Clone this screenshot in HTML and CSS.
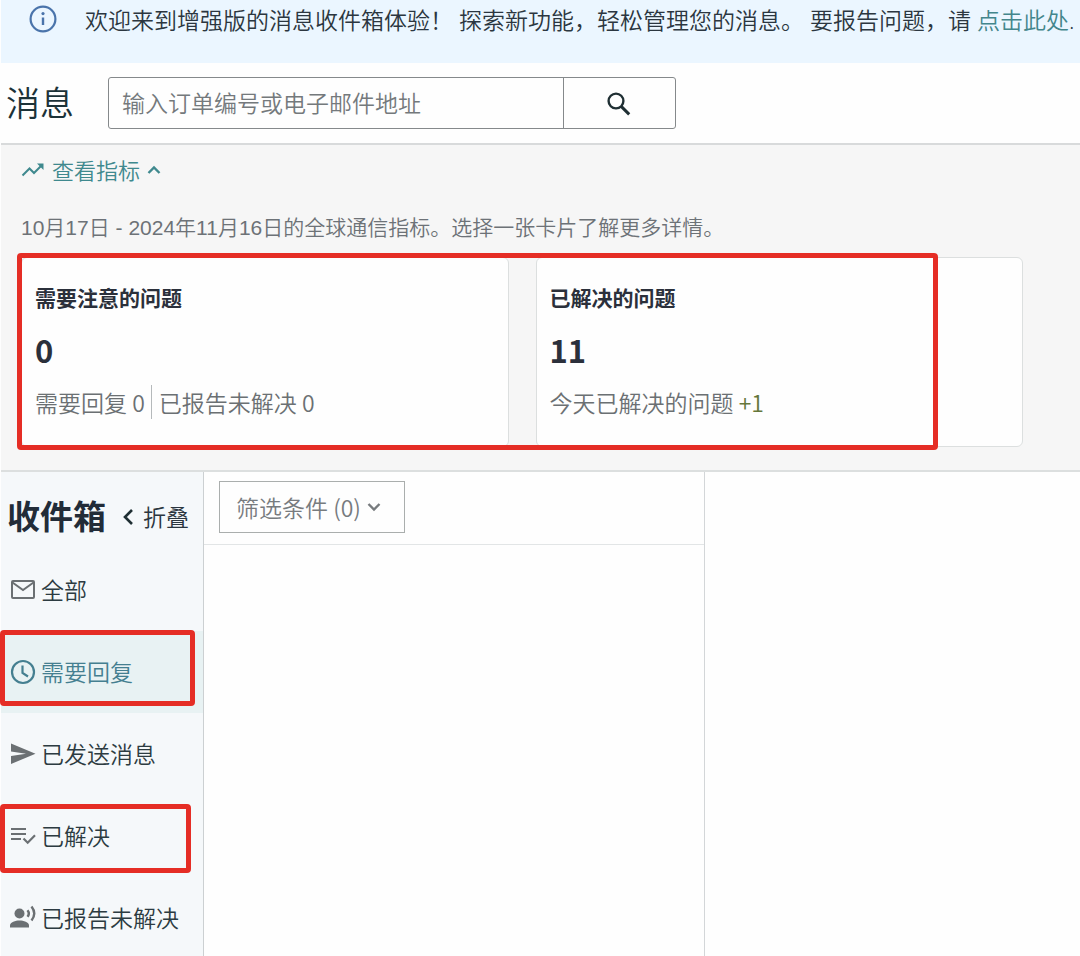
FILE: index.html
```html
<!DOCTYPE html>
<html lang="zh-CN">
<head>
  <meta charset="UTF-8">
  <meta name="viewport" content="width=device-width, initial-scale=1.0">
  <title>消息</title>
  <link rel="stylesheet" href="styles.css">
</head>
<body>

  <div class="alert">
    <svg class="alert-icon" viewBox="0 0 28 28">
      <circle cx="14" cy="14" r="12.4" fill="none" stroke="#4a74ab" stroke-width="2.2"/>
      <path d="M14 12.5v7.5" stroke="#4a74ab" stroke-width="2.4"/>
      <circle cx="14" cy="8.6" r="1.6" fill="#4a74ab"/>
    </svg>
    <p>欢迎来到增强版的消息收件箱体验！ 探索新功能，轻松管理您的消息。 要报告问题，请 <a href="#">点击此处</a>.</p>
  </div>

  <header class="header">
    <h1>消息</h1>
    <form class="search">
      <input type="text" aria-label="搜索消息" placeholder="输入订单编号或电子邮件地址">
      <button type="button" aria-label="搜索">
        <svg width="26" height="26" viewBox="0 0 26 26" fill="none" stroke="#1f2f33">
          <circle cx="9" cy="11" r="7.4" stroke-width="2.4"/>
          <path d="M14.2 16.4l8 8" stroke-width="3"/>
        </svg>
      </button>
    </form>
  </header>

  <section class="metrics">
    <button type="button" class="metrics-toggle">
      <svg width="24" height="16" viewBox="0 0 24 16" fill="none" stroke="currentColor" stroke-width="2">
        <path d="M1.5 13.5l7-7 4.5 4.5 8-8"/>
        <path d="M16 1.5h6.5V8z" fill="currentColor" stroke="none"/>
      </svg>
      查看指标
      <svg width="14" height="10" viewBox="0 0 14 10" fill="none" stroke="currentColor" stroke-width="2.4">
        <path d="M1.5 8L7 2.5 12.5 8"/>
      </svg>
    </button>
    <p class="metrics-note">10月17日 - 2024年11月16日的全球通信指标。选择一张卡片了解更多详情。</p>

    <div class="cards">
      <div class="card">
        <h2>需要注意的问题</h2>
        <div class="count">0</div>
        <p><span class="split">需要回复 0</span><span>已报告未解决 0</span></p>
      </div>
      <div class="card">
        <h2>已解决的问题</h2>
        <div class="count">11</div>
        <p>今天已解决的问题 <span class="up">+1</span></p>
      </div>
      <div class="mark mark-cards"></div>
    </div>
  </section>

  <main class="inbox">
    <nav class="sidebar">
      <div class="sidebar-head">
        <h2>收件箱</h2>
        <button type="button">
          <svg width="12" height="18" viewBox="0 0 12 18" fill="none" stroke="#1f2f33" stroke-width="2.6">
            <path d="M10 2L3 9l7 7"/>
          </svg>
          折叠
        </button>
      </div>

      <a href="#" class="item">
        <svg viewBox="0 0 26 26" fill="none" stroke="currentColor" stroke-width="2">
          <rect x="2" y="4" width="22" height="17" rx="1"/>
          <path d="M2.5 5.5L13 13l10.5-7.5"/>
        </svg>
        <span>全部</span>
      </a>
      <a href="#" class="item active">
        <svg viewBox="0 0 26 26" fill="none" stroke="currentColor" stroke-width="2.2">
          <circle cx="13" cy="13" r="11"/>
          <path d="M12.5 6.5V14l5.5 3.5"/>
        </svg>
        <span>需要回复</span>
        <i class="mark mark-reply"></i>
      </a>
      <a href="#" class="item">
        <svg viewBox="0 0 26 26" fill="currentColor">
          <path d="M1 2.5L25.5 12.8 1 23v-8l15-2.2L1 10.5z"/>
        </svg>
        <span>已发送消息</span>
      </a>
      <a href="#" class="item">
        <svg viewBox="0 0 26 26" fill="none" stroke="currentColor" stroke-width="2">
          <path d="M1 6h15M1 11h15M1 16h10"/>
          <path d="M13.5 15.5l4.2 4.2 7.3-7.4" stroke-width="2.2"/>
        </svg>
        <span>已解决</span>
        <i class="mark mark-resolved"></i>
      </a>
      <a href="#" class="item">
        <svg viewBox="0 0 26 26" fill="currentColor">
          <circle cx="9.5" cy="8.5" r="5"/>
          <path d="M0 22.5v-2.2c0-3 5.5-4.8 9.5-4.8s9.5 1.8 9.5 4.8v2.2z"/>
          <path d="M17.5 5.2q2.6 3.3 0 6.6" fill="none" stroke="currentColor" stroke-width="2.4"/>
          <path d="M21.5 1.5q5.5 7 0 14" fill="none" stroke="currentColor" stroke-width="2.4"/>
        </svg>
        <span>已报告未解决</span>
      </a>
    </nav>

    <section class="list">
      <div class="filter">
        <button type="button">
          筛选条件 (0)
          <svg width="14" height="10" viewBox="0 0 14 10" fill="none" stroke="currentColor" stroke-width="2.4">
            <path d="M1.5 2L7 7.5 12.5 2"/>
          </svg>
        </button>
      </div>
    </section>

    <section class="thread"></section>
  </main>

</body>
</html>
```

FILE: styles.css
```css
* {
  box-sizing: border-box;
}
body {
  font-family: "Open Sans", "Noto Sans CJK SC", sans-serif;
  font-size: 23px;
  font-weight: 350;
  line-height: 32px;
  margin: 0;
  padding-left: 1px;
  min-height: 100vh;
  display: flex;
  flex-direction: column;
  background-color: #fefefe;
  color: #2b3640;
}
h1, h2, p {
  margin: 0;
}
a {
  color: #43868c;
  text-decoration: none;
}
button {
  font: inherit;
  color: inherit;
  background: none;
  border: none;
  padding: 0;
  cursor: pointer;
}
svg {
  flex: none;
}

/* notice */
.alert {
  display: flex;
  align-items: flex-start;
  gap: 28px;
  height: 63px;
  padding: 5px 0 0 28px;
  line-height: 30px;
  background-color: #ebf6ff;
  white-space: nowrap;
}
.alert-icon {
  width: 28px;
  height: 28px;
}

/* title and search */
.header {
  display: flex;
  align-items: center;
  gap: 34px;
  padding: 14px 5px;
  border-bottom: 2px solid #d8dadb;
}
.header h1 {
  font-size: 34px;
  font-weight: 350;
  line-height: 48px;
  color: #1c3238;
}
.search {
  display: flex;
  width: 568px;
  height: 52px;
  border: 1px solid #85898b;
  border-radius: 3px;
}
.search input {
  flex: 1;
  min-width: 0;
  font: inherit;
  padding: 0 13px;
  border: none;
  outline: none;
  background: none;
}
.search input::placeholder {
  color: #74797c;
  opacity: 1;
}
.search button {
  display: flex;
  align-items: center;
  justify-content: center;
  width: 112px;
  border-left: 1px solid #85898b;
}

/* metrics */
.metrics {
  padding: 9px 57px 23px 20px;
  background-color: #f6f6f6;
  border-bottom: 2px solid #dcdfdf;
}
.metrics-toggle {
  display: flex;
  align-items: center;
  gap: 7px;
  font-size: 22px;
  color: #3f898e;
}
.metrics-note {
  margin: 26px 0 13px;
  font-family: "Liberation Sans", "Noto Sans CJK SC", sans-serif;
  font-size: 21px;
  color: #6d7277;
}
.cards {
  position: relative;
  display: grid;
  grid-template-columns: 1fr 1fr;
  gap: 27px;
}
.card {
  height: 190px;
  padding: 24px 13px;
  background-color: #fefefe;
  border: 1px solid #dcdfdf;
  border-radius: 6px;
  color: #6b7073;
}
.card h2 {
  font-size: 21px;
  line-height: 32px;
  color: #2b303b;
}
.card .count {
  margin: 4px 0;
  font-family: "Noto Sans CJK SC", sans-serif;
  font-size: 31px;
  font-weight: bold;
  line-height: 64px;
  color: #2b303b;
}
.card p,
.filter button {
  font-family: "Noto Sans CJK SC", sans-serif;
}
.card .split {
  margin-right: 7px;
  padding-right: 6px;
  border-right: 1px solid #b5b9bb;
}
.card .up {
  color: #64773a;
}

/* inbox */
.inbox {
  flex: 1;
  display: flex;
}
.sidebar {
  width: 203px;
  flex: none;
  background-color: #f5f8fa;
  border-right: 1px solid #ccd0d2;
}
.sidebar-head {
  display: flex;
  align-items: center;
  gap: 16px;
  height: 77px;
  padding: 12px 0 0 6px;
}
.sidebar-head h2 {
  font-size: 33px;
  color: #222c38;
}
.sidebar-head button {
  display: flex;
  align-items: center;
  gap: 9px;
  white-space: nowrap;
}
.item {
  position: relative;
  display: flex;
  align-items: center;
  gap: 5px;
  height: 82px;
  padding-left: 9px;
  color: #2c3b41;
  white-space: nowrap;
}
.item svg {
  width: 26px;
  height: 26px;
  color: #6b7073;
}
.item.active,
.item.active svg {
  color: #447f90;
}
.item.active {
  background-color: #e8f2f3;
}
.list {
  width: 501px;
  border-right: 1px solid #d3d6d8;
}
.filter {
  padding: 9px 15px 11px;
  border-bottom: 1px solid #e2e5e6;
}
.filter button {
  display: flex;
  align-items: center;
  gap: 6px;
  height: 52px;
  padding: 0 23px 0 16px;
  border: 1px solid #aaaead;
  color: #777b7e;
}
.thread {
  flex: 1;
}

/* red highlight frames */
.mark {
  position: absolute;
  border: 5px solid #e52d25;
  border-radius: 4px;
  pointer-events: none;
}
.mark-cards {
  top: -4px;
  left: -4px;
  right: 85px;
  bottom: -3px;
}
.mark-reply {
  top: -1px;
  left: -1px;
  right: 8px;
  bottom: 7px;
}
.mark-resolved {
  top: 9px;
  left: -1px;
  right: 12px;
  bottom: 4px;
}
```
